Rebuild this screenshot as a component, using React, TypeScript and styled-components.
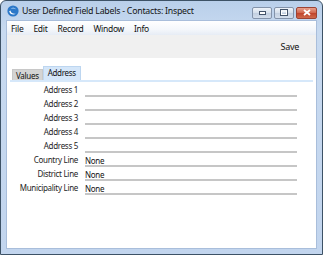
import React from 'react';
import styled, { createGlobalStyle } from 'styled-components';

const GlobalStyle = createGlobalStyle`
  html, body {
    margin: 0;
    padding: 0;
    background: #ffffff;
  }
  body {
    font-family: "Noto Sans", "Open Sans", sans-serif;
  }
`;

const Window = styled.div`
  width: 323px;
  height: 255px;
  box-sizing: border-box;
  display: flex;
  flex-direction: column;
  border: 1px solid #3d5266;
  border-radius: 6px 6px 0 0;
  background: linear-gradient(180deg, #b9cfea 0%, #c8daf0 12%, #c2d5ee 100%);
  overflow: hidden;
`;

const TitleBar = styled.div`
  height: 19px;
  display: flex;
  align-items: center;
  padding: 0 5px 0 6px;
  flex-shrink: 0;
`;

const TitleText = styled.span`
  margin-left: 3px;
  margin-top: 1px;
  font-size: 8.8px;
  letter-spacing: -0.25px;
  color: #141414;
  flex: 1;
  white-space: nowrap;
`;

const CaptionButtons = styled.div`
  display: flex;
  gap: 2px;
  margin-top: 4px;
`;

const CaptionButton = styled.div<{ $close?: boolean; $w: number }>`
  width: ${p => p.$w}px;
  height: 12px;
  box-sizing: border-box;
  border: 1px solid ${p => (p.$close ? '#9c4334' : '#8393aa')};
  border-radius: 2px;
  background: ${p =>
    p.$close
      ? 'linear-gradient(180deg, #e8a08c 0%, #d26a52 45%, #c1452d 55%, #cf6a4c 100%)'
      : 'linear-gradient(180deg, #eef3f9 0%, #d6e0ec 45%, #c3d0e1 55%, #d3deec 100%)'};
  display: flex;
  align-items: center;
  justify-content: center;
`;

const Client = styled.div`
  flex: 1;
  display: flex;
  flex-direction: column;
  margin: 0 5px 5px 5px;
  border: 1px solid #a9bedb;
  background: #ffffff;
`;

const MenuBar = styled.div`
  height: 14px;
  display: flex;
  align-items: center;
  padding-left: 1px;
  background: linear-gradient(180deg, #ffffff 0%, #f4f7fb 60%, #e6ecf5 100%);
  font-size: 8.5px;
  letter-spacing: -0.3px;
  color: #111;
`;

const MenuItem = styled.span`
  padding: 0 3px 0 3px;
  margin-right: 4px;
`;

const Toolbar = styled.div`
  height: 23px;
  display: flex;
  align-items: center;
  justify-content: flex-end;
  padding-right: 17px;
  background: #f0f0f0;
  font-size: 9px;
  letter-spacing: -0.3px;
  color: #111;
`;

const Content = styled.div`
  flex: 1;
  padding: 8px 3px 0 3px;
  background: #ffffff;
`;

const Tabs = styled.div`
  display: flex;
  align-items: flex-end;
  height: 14px;
  padding-left: 2px;
  border-bottom: 2px solid #d6e8fa;
`;

const Tab = styled.div<{ $active?: boolean }>`
  height: ${p => (p.$active ? 14 : 11)}px;
  box-sizing: border-box;
  padding: ${p => (p.$active ? '0 4px 2px 4px' : '1px 3px 0 3px')};
  display: flex;
  align-items: center;
  font-size: 8px;
  letter-spacing: -0.3px;
  color: #111;
  background: ${p => (p.$active ? '#d4e6f9' : '#d4d4d4')};
  border: 1px solid ${p => (p.$active ? '#bdd6f0' : '#c8c8c8')};
  border-bottom: none;
`;

const Form = styled.div`
  display: flex;
  flex-direction: column;
  padding-top: 1px;
`;

const Row = styled.div`
  display: grid;
  grid-template-columns: 68px 212px;
  column-gap: 7px;
  height: 14px;
  align-items: end;
`;

const Label = styled.span`
  text-align: right;
  font-size: 8px;
  letter-spacing: -0.3px;
  line-height: 10px;
  padding-bottom: 2px;
  color: #1e1e1e;
  white-space: nowrap;
`;

const Field = styled.div`
  height: 12px;
  box-sizing: border-box;
  padding-top: 1px;
  border-bottom: 2px solid #c6c6c6;
  font-size: 8px;
  letter-spacing: -0.3px;
  line-height: 9px;
  color: #111;
`;

const rows: { label: string; value?: string }[] = [
  { label: 'Address 1' },
  { label: 'Address 2' },
  { label: 'Address 3' },
  { label: 'Address 4' },
  { label: 'Address 5' },
  { label: 'Country Line', value: 'None' },
  { label: 'District Line', value: 'None' },
  { label: 'Municipality Line', value: 'None' },
];

const AppIcon = () => (
  <svg width="12" height="12" viewBox="0 0 12 12">
    <circle cx="6" cy="6" r="5.6" fill="#2c78c8" />
    <path d="M2.2 6.2 C2.6 9.2 6.4 10.4 9 8.6 C6.6 9.2 4 8.4 3.4 5.6 Z" fill="#ffffff" />
    <path d="M3.6 3.6 C5.2 2.2 8 2.6 9.2 4.4 C7.6 3.6 5.6 3.6 3.6 3.6 Z" fill="#bfe0ff" />
  </svg>
);

const App: React.FC = () => {
  return (
    <>
      <GlobalStyle />
      <Window>
        <TitleBar>
          <AppIcon />
          <TitleText>User Defined Field Labels - Contacts: Inspect</TitleText>
          <CaptionButtons>
            <CaptionButton $w={20}>
              <svg width="7" height="4" viewBox="0 0 7 4">
                <rect x="0.5" y="0.5" width="6" height="3" fill="#fff" stroke="#44546a" />
              </svg>
            </CaptionButton>
            <CaptionButton $w={20}>
              <svg width="8" height="7" viewBox="0 0 8 7">
                <rect x="0.5" y="0.5" width="7" height="6" fill="none" stroke="#44546a" />
                <rect x="1.5" y="2" width="5" height="3.5" fill="none" stroke="#fff" />
              </svg>
            </CaptionButton>
            <CaptionButton $close $w={21}>
              <svg width="8" height="7" viewBox="0 0 8 7">
                <path d="M1 1 L7 6 M7 1 L1 6" stroke="#fff" strokeWidth="1.8" />
              </svg>
            </CaptionButton>
          </CaptionButtons>
        </TitleBar>
        <Client>
          <MenuBar>
            <MenuItem>File</MenuItem>
            <MenuItem>Edit</MenuItem>
            <MenuItem>Record</MenuItem>
            <MenuItem>Window</MenuItem>
            <MenuItem>Info</MenuItem>
          </MenuBar>
          <Toolbar>Save</Toolbar>
          <Content>
            <Tabs>
              <Tab>Values</Tab>
              <Tab $active>Address</Tab>
            </Tabs>
            <Form>
              {rows.map(r => (
                <Row key={r.label}>
                  <Label>{r.label}</Label>
                  <Field>{r.value}</Field>
                </Row>
              ))}
            </Form>
          </Content>
        </Client>
      </Window>
    </>
  );
};

export default App;
